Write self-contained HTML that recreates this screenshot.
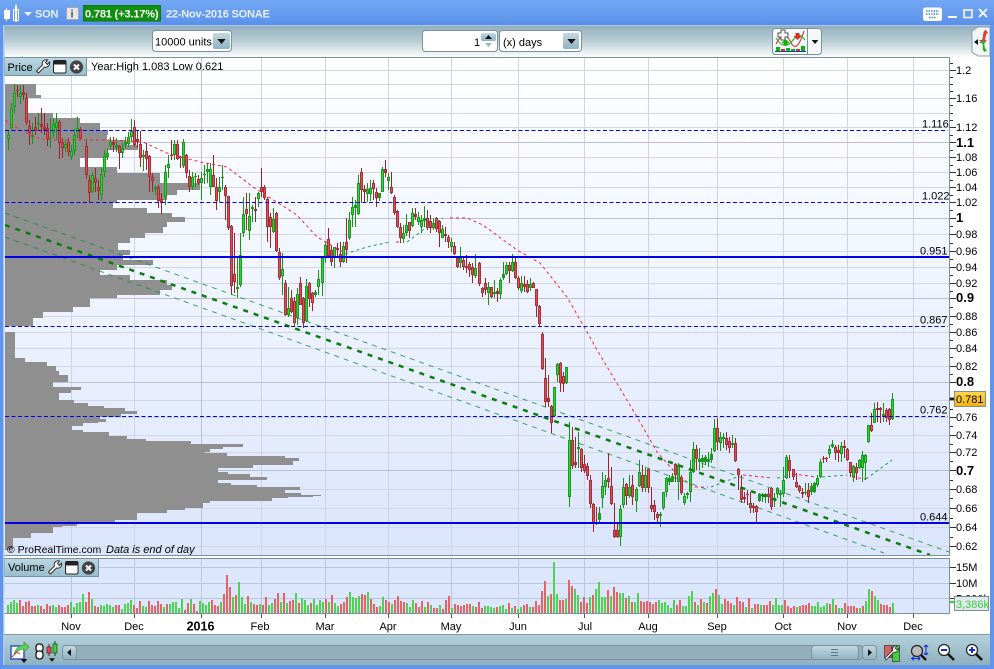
<!DOCTYPE html>
<html><head><meta charset="utf-8"><title>SON</title>
<style>
html,body{margin:0;padding:0;background:#fff;width:994px;height:669px;overflow:hidden}
svg{display:block;position:absolute;left:0;top:0}
text{font-family:"Liberation Sans",Arial,sans-serif;font-size:11px;fill:#000}
.ax{font-size:11px}
.axb{font-size:13px;font-weight:bold}
.lv{font-size:11px}
.tb{font-weight:bold;font-size:11px;fill:#e6f0ff;letter-spacing:-.2px}
</style></head><body>
<svg width="994" height="669" viewBox="0 0 994 669" xmlns="http://www.w3.org/2000/svg">
<defs>
<linearGradient id="gt" x1="0" y1="0" x2="0" y2="1"><stop offset="0" stop-color="#74a8f6"/><stop offset="1" stop-color="#5a91e8"/></linearGradient>
<linearGradient id="gb" x1="0" y1="0" x2="0" y2="1"><stop offset="0" stop-color="#93b0bd"/><stop offset=".5" stop-color="#bccfd6"/><stop offset="1" stop-color="#fbfdfd"/></linearGradient>
<linearGradient id="gc" x1="0" y1="0" x2="0" y2="1"><stop offset="0" stop-color="#feffff"/><stop offset=".35" stop-color="#f3f7ff"/><stop offset="1" stop-color="#dbe5fc"/></linearGradient>
<linearGradient id="gf" x1="0" y1="0" x2="0" y2="1"><stop offset="0" stop-color="#b3d1dc"/><stop offset="1" stop-color="#8fb0be"/></linearGradient>
<linearGradient id="gp" x1="0" y1="0" x2="0" y2="1"><stop offset="0" stop-color="#bcd8e2"/><stop offset="1" stop-color="#98bdcb"/></linearGradient>
<linearGradient id="gy" x1="0" y1="0" x2="0" y2="1"><stop offset="0" stop-color="#ffd84f"/><stop offset="1" stop-color="#f6b500"/></linearGradient>
<linearGradient id="gbtn" x1="0" y1="0" x2="0" y2="1"><stop offset="0" stop-color="#c3d8e1"/><stop offset="1" stop-color="#8fb2c2"/></linearGradient>
<symbol id="wr" width="15" height="15" viewBox="0 0 15 15"><path d="M1 12L7 6C6 3 8 0 12 1L10 3.5 11.8 5.5 14 3C15 6 12 9 9 8L3 14Z" fill="#fff" stroke="#333" stroke-width="1"/></symbol>
<symbol id="win" width="14" height="14" viewBox="0 0 14 14"><rect x=".5" y=".5" width="12.5" height="12.5" rx="1.5" fill="#fff" stroke="#222"/><rect x="1" y="1" width="11.5" height="3.5" fill="#222"/></symbol>
<symbol id="cl" width="14" height="14" viewBox="0 0 14 14"><circle cx="7" cy="7" r="6.6" fill="#444"/><path d="M4.5 4.5l5 5M9.5 4.5l-5 5" stroke="#fff" stroke-width="2"/></symbol>
<symbol id="dn" width="10" height="6" viewBox="0 0 10 6"><path d="M0 0H10L5 6Z" fill="#111"/></symbol>
</defs>

<!-- window frame -->
<rect width="994" height="669" fill="#fff"/>
<rect width="994" height="25" fill="url(#gt)"/>
<rect y="25" width="994" height="1" fill="#a9c6ee"/>
<rect x="4" y="26" width="986" height="31" fill="url(#gb)"/>

<!-- chart pane -->
<rect x="5" y="57" width="944" height="498" fill="url(#gc)"/>
<g stroke="#d3d7e5" stroke-width="1" shape-rendering="crispEdges">
<path d="M5 70.5H949M5 84.5H949M5 98.5H949M5 113.5H949M5 127.5H949M5 157.5H949M5 172.5H949M5 187.5H949M5 234.5H949M5 251.5H949M5 267.5H949M5 283.5H949M5 316.5H949M5 332.5H949M5 348.5H949M5 366.5H949M5 400.5H949M5 417.5H949M5 435.5H949M5 452.5H949M5 489.5H949M5 508.5H949M5 527.5H949M5 546.5H949"/>
<path d="M71.5 57V555M134.5 57V555M261.5 57V555M325.5 57V555M388.5 57V555M451.5 57V555M518.5 57V555M584.5 57V555M648.5 57V555M717.5 57V555M783.5 57V555M847.5 57V555M913.5 57V555" stroke="#cfd3e2"/>
<path d="M5 142.5H949M5 218.5H949M5 298.5H949M5 382.5H949M5 470.5H949" stroke="#bcc0d4"/>
<path d="M201.5 57V555" stroke="#bcc0d4"/>
</g>

<!-- volume profile -->
<path fill="#8f8f8f" shape-rendering="crispEdges" d="M5 84H36V95H41V98H27V113H53V118H80V123H100V130H108V135H107V140H125V145H138V150H107V158H80V167H117V173H160V183H200V190H177V195H167V200H117V203H113V208H147V213H172V217H185V222H167V227H163V233H145V238H130V243H118V250H130V255H123V260H153V265H117V270H100V275H130V280H167V285H172V290H160V295H117V298H90V307H73V312H43V318H33V326H5Z"/>
<path fill="#8f8f8f" shape-rendering="crispEdges" d="M5 332H15V358H25V362H47V366H56V371H59V375H68V382H53V387H81V390H71V393H59V400H74V403H88V406H104V408H125V411H137V414H121V417H100V419H106V422H98V423H83V426H72V430H83V432H109V436H127V439H146V441H191V444H243V447H223V449H210V452H205V453H227V456H285V458H299V461H293V465H253V468H218V472H228V474H250V477H267V480H218V483H231V485H257V487H300V490H285V493H301V495H321V496H313V497H288V498H272V501H210V503H203V508H185V510H167V513H137V520H115V523H77V526H62V527H53V533H31V538H13V550H5Z"/>

<!-- candles -->
<g transform="translate(.5,0)" fill="none">
<path stroke="#149314" stroke-width="1" d="M8 130V150M11 103V130M14 84V113M20 85V104M32 123V144M38 113V131M50 118V148M53 118V138M56 113V140M65 140V152M71 145V160M74 129V155M77 117V138M92 172V193M101 168V201M104 150V177M107 148V160M110 137V150M116 138V152M122 143V158M125 137V148M128 132V147M131 119V142M143 150V171M155 185V195M165 165V205M168 155V178M174 140V160M183 139V168M192 172V190M195 173V187M201 172V200M204 165V184M207 163V183M210 163V195M219 177V202M222 165V190M237 258V298M240 233V287M243 197V237M249 193V240M252 205V222M258 192V207M273 208V233M282 253V295M288 287V317M297 288V325M306 279V322M315 290V297M318 270V295M322 257V296M325 242V263M334 247V268M343 242V263M349 212V240M352 197V227M355 200V227M358 175V215M367 183V202M370 180V201M379 193V201M382 167V192M388 173V190M403 225V243M406 214V236M412 208V227M418 212V225M421 215V233M424 206V227M433 218V230M442 225V238M451 238V252M460 247V268M475 254V278M488 282V305M494 280V298M500 278V299M503 262V280M506 262V275M512 254V272M521 276V293M530 278V291M554 387V417M557 363V382M566 367V384M569 422V507M578 432V468M599 507V522M602 472V508M605 475V495M620 505V546M623 478V508M629 475V498M636 487V512M639 460V487M645 468V492M660 512V527M663 492V510M666 477V497M669 475V485M672 473V482M678 463V500M684 493V505M687 492V499M690 460V502M693 442V473M699 448V470M702 455V468M705 455V465M708 452V467M711 448V463M714 419V452M720 432V451M723 433V448M732 435V448M759 493V502M762 493V502M765 493V503M774 493V507M777 487V498M780 490V507M783 467V497M786 455V479M805 483V495M811 483V495M814 482V493M817 475V487M820 459V478M829 445V458M832 440V448M841 442V462M853 465V482M859 459V469M862 451V482M865 454V480M868 425V443M874 403V423M883 403V422M892 393V420"/>
<path stroke="#1a9a20" stroke-width="3" d="M8 135V139M11 108V128M14 93V107M20 93V97M32 135V137M38 123V124M50 138V139M53 124V133M56 122V128M65 144V148M71 151V157M74 135V151M77 128V132M92 175V192M101 174V195M104 156V172M107 153V157M110 142V146M116 145V148M122 148V153M125 142V145M128 137V144M131 131V137M143 155V157M155 187V190M165 172V197M168 164V168M174 144V155M183 142V166M192 177V187M195 176V177M201 178V183M204 174V175M207 169V172M210 169V187M219 187V192M222 177V178M237 287V289M240 255V285M243 214V233M249 216V231M252 207V209M258 193V199M273 219V232M282 269V276M288 308V315M297 294V318M306 286V321M315 292V295M318 279V287M322 258V283M325 245V258M334 247V258M343 246V262M349 220V238M352 207V215M355 205V208M358 183V214M367 189V194M370 188V194M379 193V198M382 169V192M388 177V181M403 233V239M406 225V233M412 213V226M418 217V222M421 220V227M424 218V221M433 223V228M442 229V238M451 242V247M460 258V263M475 268V276M488 287V293M494 292V294M500 280V294M503 274V278M506 265V274M512 262V271M521 283V291M530 284V288M554 387V416M557 364V375M566 367V383M569 440V497M578 447V449M599 513V520M602 486V498M605 480V487M620 509V537M623 487V505M629 487V496M636 489V501M639 472V486M645 475V488M660 514V516M663 492V508M666 478V492M669 478V482M672 476V482M678 465V482M684 496V503M687 493V495M690 472V492M693 449V472M699 459V462M702 458V462M705 457V462M708 459V462M711 454V460M714 428V451M720 437V443M723 437V439M732 443V445M759 494V501M762 495V496M765 494V497M774 498V499M777 488V494M780 493V495M783 480V494M786 457V478M805 492V493M811 486V492M814 483V492M817 478V485M820 462V477M829 449V454M832 444V447M841 446V454M853 466V477M859 460V468M862 455V468M865 455V463M868 425V442M874 409V423M883 414V417M892 399V419"/>
<path stroke="#2fd435" stroke-width="1" d="M8 136V138M11 109V127M14 94V106M20 94V96M53 125V132M56 123V127M65 145V147M71 152V156M74 136V150M77 129V131M92 176V191M101 175V194M104 157V171M107 154V156M110 143V145M122 149V152M128 138V143M131 132V136M165 173V196M168 165V167M174 145V154M183 143V165M192 178V186M201 179V182M210 170V186M219 188V191M240 256V284M243 215V232M249 217V230M258 194V198M273 220V231M282 270V275M288 309V314M297 295V317M306 287V320M318 280V286M322 259V282M325 246V257M334 248V257M343 247V261M349 221V237M352 208V214M358 184V213M367 190V193M370 189V193M382 170V191M388 178V180M403 234V238M406 226V232M412 214V225M418 218V221M421 221V226M433 224V227M442 230V237M451 243V246M460 259V262M475 269V275M488 288V292M500 281V293M506 266V273M512 263V270M521 284V290M530 285V287M554 388V415M557 365V374M566 368V382M569 441V496M602 487V497M605 481V486M620 510V536M623 488V504M629 488V495M636 490V500M639 473V485M645 476V487M663 493V507M666 479V491M678 466V481M684 497V502M690 473V491M693 450V471M714 429V450M720 438V442M765 495V496M777 489V493M783 481V493M786 458V477M817 479V484M820 463V476M829 450V453M841 447V453M853 467V476M859 461V467M862 456V467M865 456V462M868 426V441M874 410V422M892 400V418"/>
<path stroke="#a02229" stroke-width="1" d="M17 85V97M23 85V100M26 93V125M29 120V145M35 117V135M41 108V133M44 113V135M47 123V146M59 120V159M62 138V158M68 138V156M80 127V140M86 139V179M89 175V203M95 168V192M98 180V200M113 137V152M119 145V169M134 120V147M137 130V148M140 131V167M146 143V170M149 155V192M152 173V192M158 185V208M161 193V214M171 140V160M177 140V160M180 156V168M186 154V178M189 170V192M198 175V185M213 155V187M216 178V210M225 185V220M228 197V230M231 225V295M234 233V293M246 193V230M255 197V222M261 168V197M264 185V200M267 197V242M270 213V248M276 212V252M279 248V280M285 280V316M291 290V313M294 297V327M300 277V305M303 297V328M309 282V307M312 292V311M328 228V258M331 245V266M337 243V258M340 242V267M346 218V263M361 168V203M364 185V202M373 180V200M376 188V207M385 160V177M391 172V194M394 195V215M397 210V228M400 223V243M409 222V238M415 208V220M427 210V230M430 215V233M436 217V232M439 220V247M445 227V242M448 235V248M454 242V255M457 257V268M463 257V270M466 255V273M469 262V277M472 263V283M479 262V286M482 287V297M485 278V295M491 287V298M497 288V302M509 262V283M515 257V279M518 276V290M524 276V292M527 280V293M533 282V288M536 289V317M539 305V327M542 332V370M545 358V407M548 375V407M551 405V433M560 362V392M563 372V392M572 427V469M575 437V468M581 448V472M584 455V473M587 463V480M590 475V508M593 503V532M596 507V525M608 453V488M611 467V505M614 503V538M617 523V538M626 483V505M632 475V505M642 465V492M648 468V493M651 487V512M654 500V520M657 512V522M675 463V482M681 475V495M696 445V470M717 418V450M726 432V450M729 437V453M735 438V462M738 468V490M741 475V503M744 492V503M747 490V505M750 492V513M753 503V513M756 505V522M768 488V503M771 487V510M789 455V478M793 469V480M796 473V488M799 485V493M802 488V498M808 483V503M823 456V463M826 457V462M835 445V460M838 445V462M844 440V458M847 448V461M850 462V477M856 463V480M871 413V432M877 402V422M880 407V423M886 408V422M889 408V425"/>
<path stroke="#a82f35" stroke-width="3" d="M17 90V91M23 92V95M26 98V123M29 126V133M35 127V131M41 124V127M44 127V131M47 128V139M59 122V143M62 142V148M68 142V152M80 129V139M86 146V175M89 180V193M95 178V183M98 187V191M113 142V145M119 146V153M134 127V145M137 139V142M140 144V158M146 151V159M149 156V177M152 177V181M158 187V201M161 199V203M171 155V156M177 144V159M180 157V158M186 155V173M189 176V187M198 179V183M213 175V187M216 187V201M225 187V196M228 196V228M231 226V286M234 274V282M246 209V214M255 209V211M261 187V192M264 187V198M267 199V227M270 217V227M276 213V251M279 252V278M285 283V315M291 298V312M294 301V323M300 283V305M303 298V323M309 283V299M312 293V303M328 239V256M331 250V262M337 248V250M340 254V262M346 242V250M361 172V190M364 189V192M373 183V189M376 192V198M385 169V173M391 187V193M394 197V213M397 211V227M400 227V238M409 222V231M415 214V217M427 218V228M430 221V228M436 218V229M439 221V233M445 234V236M448 237V242M454 246V254M457 258V267M463 260V267M466 266V268M469 264V270M472 267V275M479 263V284M482 288V293M485 283V290M491 287V297M497 291V294M509 265V271M515 262V278M518 278V288M524 284V287M527 284V292M533 283V288M536 289V306M539 306V324M542 334V369M545 378V402M548 398V402M551 406V423M560 363V383M563 376V384M572 440V466M575 462V465M581 449V468M584 464V471M587 466V476M590 480V504M593 504V524M596 522V524M608 478V482M611 486V504M614 530V537M617 530V537M626 484V496M632 485V497M642 475V488M648 469V488M651 505V509M654 505V512M657 514V518M675 464V475M681 477V493M696 449V459M717 428V442M726 438V445M729 441V448M735 443V461M738 469V475M741 487V500M744 497V499M747 494V495M750 503V508M753 506V508M756 506V512M768 494V497M771 488V507M789 460V471M793 469V477M796 482V487M799 486V491M802 492V494M808 490V497M823 458V459M826 458V459M835 447V453M838 450V453M844 446V448M847 449V460M850 462V473M856 467V473M871 425V431M877 408V410M880 408V410M886 410V418M889 409V420"/>
<path stroke="#d9505a" stroke-width="1" d="M26 99V122M29 127V132M35 128V130M47 129V138M59 123V142M62 143V147M68 143V151M80 130V138M86 147V174M89 181V192M95 179V182M98 188V190M119 147V152M134 128V144M140 145V157M146 152V158M149 157V176M152 178V180M158 188V200M161 200V202M177 145V158M186 156V172M189 177V186M198 180V182M213 176V186M216 188V200M225 188V195M228 197V227M231 227V285M234 275V281M246 210V213M261 188V191M264 188V197M267 200V226M270 218V226M276 214V250M279 253V277M285 284V314M291 299V311M294 302V322M300 284V304M303 299V322M309 284V298M312 294V302M328 240V255M331 251V261M340 255V261M346 243V249M361 173V189M373 184V188M376 193V197M391 188V192M394 198V212M397 212V226M400 228V237M409 223V230M427 219V227M430 222V227M436 219V228M439 222V232M448 238V241M454 247V253M457 259V266M463 261V266M469 265V269M472 268V274M479 264V283M482 289V292M485 284V289M491 288V296M509 266V270M515 263V277M518 279V287M524 285V286M527 285V291M533 284V287M536 290V305M539 307V323M542 335V368M545 379V401M551 407V422M560 364V382M563 377V383M572 441V465M581 450V467M584 465V470M587 467V475M590 481V503M593 505V523M608 479V481M611 487V503M614 531V536M617 531V536M626 485V495M632 486V496M642 476V487M648 470V487M651 506V508M654 506V511M657 515V517M675 465V474M681 478V492M696 450V458M717 429V441M726 439V444M729 442V447M735 444V460M738 470V474M741 488V499M750 504V507M756 507V511M768 495V496M771 489V506M789 461V470M793 470V476M796 483V486M799 487V490M808 491V496M835 448V452M838 451V452M847 450V459M850 463V472M856 468V472M871 426V430M886 411V417M889 410V419"/>
</g>

<!-- MA dashed curves -->
<g fill="none" stroke-width="1" stroke-dasharray="3 3">
<path stroke="#ee2a3a" d="M5 120L20 130 40 139 60 140 87 140 110 140 143 142 167 153 200 162 227 167 253 187 297 215 317 237 345 253"/>
<path stroke="#1f9f55" d="M345 254L367 247 390 242"/>
<path stroke="#ee2a3a" d="M396 242H402"/>
<path stroke="#1f9f55" d="M407 242L423 230 443 218"/>
<path stroke="#ee2a3a" d="M450 218H467L483 225 517 250 540 263 567 297 583 325 600 355 615 380 640 422 657 452 673 470 693 487H708"/>
<path stroke="#1f9f55" d="M711 487L737 477"/>
<path stroke="#ee2a3a" d="M743 475L773 478"/>
<path stroke="#1f9f55" d="M777 478L788 476"/>
<path stroke="#ee2a3a" d="M793 474L817 477"/>
<path stroke="#1f9f55" d="M822 477L847 475"/>
<path stroke="#ee2a3a" d="M852 477L865 479"/>
<path stroke="#1f9f55" d="M866 479L892 460"/>
</g>

<!-- trend channel -->
<g fill="none">
<path d="M5 213L949 552" stroke="#148f3a" stroke-opacity=".8" stroke-width="1" stroke-dasharray="5 5"/>
<path d="M5 237L884 553" stroke="#148f3a" stroke-opacity=".8" stroke-width="1" stroke-dasharray="5 5"/>
<path d="M5 225L930 555" stroke="#0a7d0a" stroke-width="2.5" stroke-dasharray="5 6"/>
</g>

<!-- horizontal levels -->
<g shape-rendering="crispEdges">
<path d="M5 130.500H948M5 202.500H948M5 326.500H948M5 416.500H948" stroke="#0000f0" stroke-width="1" stroke-dasharray="4 2.5" fill="none"/>
<rect x="5" y="256" width="944" height="2" fill="#0000e6"/>
<rect x="5" y="522" width="944" height="2" fill="#0000e6"/>
</g>
<text class="lv" x="922" y="127.500">1.116</text>
<text class="lv" x="922" y="199.500">1.022</text>
<text class="lv" x="920" y="254.500">0.951</text>
<text class="lv" x="920" y="323.500">0.867</text>
<text class="lv" x="920" y="413.500">0.762</text>
<text class="lv" x="920" y="520.500">0.644</text>

<text x="7" y="553" style="font-size:10.500px">© ProRealTime.com</text>
<text x="106" y="553" font-style="italic">Data is end of day</text>

<!-- chart border -->
<g stroke="#7d8f9a" fill="none" shape-rendering="crispEdges">
<path d="M4 57.500H949.500V555.500H4"/>
<path d="M4 558.500H949.500V613.500H4"/>
</g>

<!-- Y axis -->
<g stroke="#333" stroke-width="1" shape-rendering="crispEdges">
<path d="M950 70.500h6M950 84.500h3M950 98.500h6M950 113.500h3M950 127.500h6M950 142.500h6M950 157.500h6M950 172.500h6M950 187.500h6M950 202.500h6M950 218.500h6M950 234.500h6M950 251.500h6M950 267.500h6M950 283.500h6M950 298.500h6M950 316.500h6M950 332.500h6M950 348.500h6M950 366.500h6M950 382.500h6M950 417.500h6M950 435.500h6M950 452.500h6M950 470.500h6M950 489.500h6M950 508.500h6M950 527.500h6M950 546.500h6"/>
<path d="M950 63.500h3M950 77.500h3M950 91.500h3M950 105.500h3M950 120.500h3M950 135.500h3M950 150.500h3M950 165.500h3M950 180.500h3M950 195.500h3M950 210.500h3M950 226.500h3M950 243.500h3M950 259.500h3M950 275.500h3M950 291.500h3M950 307.500h3M950 324.500h3M950 340.500h3M950 357.500h3M950 374.500h3M950 409.500h3M950 426.500h3M950 444.500h3M950 461.500h3M950 480.500h3M950 498.500h3M950 518.500h3M950 537.500h3"/>
<rect x="950" y="398" width="6" height="2" fill="#000"/>
</g>
<text class="ax" x="956" y="74">1.2</text><text class="ax" x="956" y="102">1.16</text><text class="ax" x="956" y="131">1.12</text><text class="axb" x="956" y="147">1.1</text><text class="ax" x="956" y="161">1.08</text><text class="ax" x="956" y="176">1.06</text><text class="ax" x="956" y="191">1.04</text><text class="ax" x="956" y="206">1.02</text><text class="axb" x="956" y="222">1</text><text class="ax" x="956" y="238">0.98</text><text class="ax" x="956" y="255">0.96</text><text class="ax" x="956" y="271">0.94</text><text class="ax" x="956" y="287">0.92</text><text class="axb" x="956" y="302">0.9</text><text class="ax" x="956" y="320">0.88</text><text class="ax" x="956" y="336">0.86</text><text class="ax" x="956" y="352">0.84</text><text class="ax" x="956" y="370">0.82</text><text class="axb" x="956" y="386">0.8</text><text class="ax" x="956" y="421">0.76</text><text class="ax" x="956" y="439">0.74</text><text class="ax" x="956" y="456">0.72</text><text class="axb" x="956" y="475">0.7</text><text class="ax" x="956" y="493">0.68</text><text class="ax" x="956" y="512">0.66</text><text class="ax" x="956" y="531">0.64</text><text class="ax" x="956" y="550">0.62</text>
<rect x="954.500" y="391.500" width="31" height="15" fill="url(#gy)" stroke="#7b8e9a"/>
<text class="ax" x="956" y="403">0.781</text>

<!-- volume pane -->
<rect x="5" y="559" width="944" height="54" fill="#dce6fc"/>
<g stroke="#bcc6de" stroke-width="1" shape-rendering="crispEdges">
<path d="M5 567.500H949M5 583.500H949M5 598.500H949"/>
<path d="M71.500 559V613M134.500 559V613M201.500 559V613M261.500 559V613M325.500 559V613M388.500 559V613M451.500 559V613M518.500 559V613M584.500 559V613M648.500 559V613M717.500 559V613M783.500 559V613M847.500 559V613M913.500 559V613"/>
</g>
<g fill="none" stroke-width="2" shape-rendering="crispEdges">
<path stroke="#4fd24f" d="M8 613v-8M11 613v-11M14 613v-13M17 613v-10M38 613v-8M53 613v-8M56 613v-6M71 613v-11M74 613v-6M77 613v-10M80 613v-11M83 613v-19M92 613v-14M101 613v-8M104 613v-7M107 613v-9M110 613v-8M113 613v-6M122 613v-4M125 613v-9M128 613v-10M131 613v-13M143 613v-7M146 613v-6M164 613v-6M170 613v-9M173 613v-11M176 613v-11M179 613v-5M182 613v-14M191 613v-14M200 613v-12M203 613v-10M206 613v-8M209 613v-11M221 613v-11M233 613v-16M239 613v-31M242 613v-16M245 613v-9M251 613v-11M260 613v-9M269 613v-8M272 613v-10M281 613v-11M287 613v-10M296 613v-20M302 613v-15M305 613v-13M308 613v-8M314 613v-14M317 613v-8M320 613v-13M323 613v-11M329 613v-11M335 613v-10M338 613v-7M350 613v-21M353 613v-16M356 613v-15M359 613v-17M368 613v-21M380 613v-7M383 613v-16M392 613v-9M407 613v-10M410 613v-6M413 613v-13M425 613v-6M431 613v-8M440 613v-8M452 613v-5M473 613v-7M485 613v-7M488 613v-7M491 613v-6M494 613v-5M500 613v-7M503 613v-8M506 613v-4M512 613v-5M518 613v-4M521 613v-6M530 613v-6M548 613v-17M554 613v-51M557 613v-19M566 613v-14M575 613v-24M578 613v-18M590 613v-16M596 613v-24M599 613v-31M602 613v-16M605 613v-16M611 613v-17M620 613v-20M623 613v-20M629 613v-17M635 613v-11M638 613v-20M659 613v-13M662 613v-10M665 613v-11M668 613v-8M671 613v-5M674 613v-13M683 613v-7M686 613v-7M689 613v-17M692 613v-22M698 613v-8M704 613v-11M710 613v-17M713 613v-20M719 613v-18M722 613v-9M734 613v-8M746 613v-6M752 613v-5M761 613v-8M773 613v-8M776 613v-15M779 613v-8M782 613v-8M797 613v-6M812 613v-7M815 613v-7M818 613v-11M821 613v-6M824 613v-7M827 613v-10M833 613v-14M839 613v-5M842 613v-5M860 613v-5M866 613v-12M869 613v-24M875 613v-17M878 613v-13M893 613v-10"/>
<path stroke="#e36464" d="M20 613v-13M23 613v-7M26 613v-11M29 613v-12M32 613v-7M35 613v-7M41 613v-7M44 613v-4M47 613v-9M50 613v-7M59 613v-8M62 613v-6M65 613v-6M68 613v-8M86 613v-11M89 613v-21M95 613v-7M98 613v-6M116 613v-8M119 613v-8M134 613v-8M137 613v-5M140 613v-12M149 613v-12M152 613v-8M155 613v-7M158 613v-12M161 613v-9M167 613v-9M185 613v-3M188 613v-10M194 613v-9M197 613v-2M212 613v-13M215 613v-8M218 613v-7M224 613v-19M227 613v-38M230 613v-26M236 613v-18M248 613v-17M254 613v-9M257 613v-8M263 613v-8M266 613v-16M275 613v-14M278 613v-20M284 613v-20M290 613v-12M293 613v-13M299 613v-10M311 613v-10M326 613v-14M332 613v-18M341 613v-9M344 613v-11M347 613v-16M362 613v-19M365 613v-18M371 613v-14M374 613v-9M377 613v-6M386 613v-13M389 613v-11M395 613v-13M398 613v-17M401 613v-12M404 613v-11M416 613v-10M419 613v-6M422 613v-12M428 613v-11M434 613v-5M437 613v-5M443 613v-4M446 613v-13M449 613v-17M455 613v-9M458 613v-8M461 613v-7M464 613v-8M467 613v-9M470 613v-9M476 613v-6M479 613v-11M482 613v-5M497 613v-6M509 613v-10M515 613v-7M524 613v-8M527 613v-9M533 613v-6M536 613v-12M539 613v-8M542 613v-22M545 613v-32M551 613v-19M560 613v-13M563 613v-13M569 613v-33M572 613v-27M581 613v-11M584 613v-16M587 613v-10M593 613v-18M608 613v-23M614 613v-26M617 613v-21M626 613v-15M632 613v-11M641 613v-12M644 613v-11M647 613v-12M650 613v-11M653 613v-9M656 613v-11M677 613v-8M680 613v-13M695 613v-11M701 613v-14M707 613v-10M716 613v-24M725 613v-14M728 613v-12M731 613v-10M737 613v-16M740 613v-12M743 613v-11M749 613v-15M755 613v-9M758 613v-9M764 613v-8M767 613v-8M770 613v-12M785 613v-13M788 613v-7M791 613v-5M794 613v-7M800 613v-7M803 613v-8M806 613v-8M809 613v-10M830 613v-9M836 613v-8M845 613v-10M848 613v-7M851 613v-7M854 613v-7M857 613v-5M863 613v-7M872 613v-22M881 613v-9M884 613v-8M887 613v-8M890 613v-6"/>
</g>

<!-- volume axis -->
<g stroke="#333" shape-rendering="crispEdges"><path d="M950 567.500h6M950 583.500h6M950 598.500h6"/></g>
<text class="ax" x="956" y="571">15M</text>
<text class="ax" x="956" y="587">10M</text>
<text class="ax" x="956" y="602.500">5,000k</text>
<rect x="954.500" y="596.500" width="34" height="14" fill="#dfe9ee" stroke="#7b8e9a"/>
<text class="ax" x="956" y="608" style="fill:#3bd03b">3,386k</text>
<rect x="950" y="601" width="5" height="2" fill="#3bd03b"/>

<!-- pane headers -->
<rect x="4.500" y="57.500" width="82" height="18" fill="url(#gp)" stroke="#7a929c"/>
<text x="7.500" y="71">Price</text>
<use href="#wr" x="35.500" y="59"/><use href="#win" x="53" y="60"/><use href="#cl" x="69.500" y="60"/>
<text x="91" y="70">Year:High 1.083 Low 0.621</text>

<rect x="4.500" y="558.500" width="94" height="18" fill="url(#gp)" stroke="#7a929c"/>
<text x="8" y="571">Volume</text>
<use href="#wr" x="47.500" y="560"/><use href="#win" x="65" y="561"/><use href="#cl" x="81.500" y="561"/>

<!-- date axis -->
<rect x="4" y="614" width="986" height="20" fill="#fff"/>
<g stroke="#555" shape-rendering="crispEdges"><path d="M71.500 614v4M134.500 614v4M201.500 614v4M261.500 614v4M325.500 614v4M388.500 614v4M451.500 614v4M518.500 614v4M584.500 614v4M648.500 614v4M717.500 614v4M783.500 614v4M847.500 614v4M913.500 614v4"/></g>
<g text-anchor="middle">
<text x="71" y="630">Nov</text><text x="134" y="630">Dec</text><text x="200.500" y="630.500" style="font-weight:bold;font-size:12.500px">2016</text><text x="260" y="630">Feb</text><text x="325" y="630">Mar</text><text x="388" y="630">Apr</text><text x="451" y="630">May</text><text x="518" y="630">Jun</text><text x="585" y="630">Jul</text><text x="648" y="630">Aug</text><text x="717" y="630">Sep</text><text x="783" y="630">Oct</text><text x="847" y="630">Nov</text><text x="913" y="630">Dec</text>
</g>

<!-- bottom toolbar -->
<rect x="4" y="634" width="986" height="1" fill="#7f98a4"/>
<rect x="4" y="635" width="986" height="30" fill="url(#gf)"/>
<rect x="62.500" y="645.500" width="800" height="14" rx="3" fill="#94b0be" stroke="#7a939f"/>
<rect x="62.500" y="645.500" width="14" height="14" rx="3" fill="url(#gbtn)" stroke="#7a939f"/>
<path d="M71 649v7l-4-3.500z" fill="#111"/>
<rect x="811.500" y="645.500" width="47" height="14" rx="3" fill="url(#gbtn)" stroke="#7a939f"/>
<path d="M831 649.500h7M831 652.500h7M831 655.500h7" stroke="#5f7885"/>
<rect x="862.500" y="645.500" width="14" height="14" rx="3" fill="url(#gbtn)" stroke="#7a939f"/>
<path d="M868 649v7l4-3.500z" fill="#111"/>

<!-- bottom-left icons -->
<rect x="11" y="646" width="13" height="13" fill="#fff" stroke="#2a55c8" stroke-width="1.500"/>
<path d="M12 657l5-5 3 2" stroke="#d33" fill="none"/>
<path d="M14 654C16 648 20 645 24 645V642l5 5-5 5V649C20 649 17 651 14 654Z" fill="#5fcf5f" stroke="#3a9a3a" stroke-width=".7"/>
<use href="#dn" x="20.500" y="659" width="7" height="4"/>
<g fill="#fff" stroke="#111" stroke-width="1.300"><rect x="36" y="644" width="7" height="8" rx="3"/><rect x="36" y="651" width="7" height="8" rx="3"/></g>
<rect x="47" y="647" width="4" height="6" fill="#d9505a" stroke="#8a2a2a"/>
<rect x="53" y="644" width="4" height="9" fill="#3fd03f" stroke="#1b7a1b"/>
<path d="M49 644v3M49 653v3M55 641v3M55 653v3" stroke="#333"/>
<use href="#dn" x="49" y="658" width="6" height="4"/>

<!-- bottom-right icons -->
<rect x="884.500" y="645.500" width="7" height="12" fill="#d86060" stroke="#555"/>
<rect x="892.500" y="645.500" width="7" height="16" fill="#3fd03f" stroke="#555"/>
<path d="M885 658l8-8c-1-2 1-5 4-4l-2 2 2 2 2-2c0 3-3 5-5 4l-8 8z" fill="#fff" stroke="#333" stroke-width=".8"/>
<circle cx="917" cy="651" r="5.500" fill="#bbb" stroke="#222" stroke-width="1.200"/>
<path d="M921 655l5 5" stroke="#111" stroke-width="2.500"/>
<path d="M911 658.500h9M912 658.500l2-2M912 658.500l2 2M920 658.500l-2-2M920 658.500l-2 2M926 645v10M926 645l-2 2M926 645l2 2M926 655l-2-2M926 655l2-2" stroke="#0a2be0" fill="none"/>
<circle cx="944" cy="650" r="5.500" fill="#fff" stroke="#222" stroke-width="1.200"/>
<path d="M941 650h6" stroke="#0a2be0" stroke-width="2"/>
<path d="M948 654l6 6" stroke="#111" stroke-width="2.500"/>
<circle cx="972" cy="650" r="5.500" fill="#fff" stroke="#222" stroke-width="1.200"/>
<path d="M969 650h6M972 647v6" stroke="#0a2be0" stroke-width="2"/>
<path d="M976 654l6 6" stroke="#111" stroke-width="2.500"/>

<!-- top toolbar controls -->
<rect x="152.500" y="30.500" width="79" height="21" rx="3" fill="#fff" stroke="#7a929c"/>
<text x="155" y="45.500">10000 units</text>
<rect x="213" y="33" width="17" height="16" rx="2" fill="url(#gbtn)"/>
<use href="#dn" x="217" y="39" width="9" height="5"/>
<rect x="422.500" y="30.500" width="75" height="21" rx="3" fill="#fff" stroke="#7a929c"/>
<text x="474" y="46">1</text>
<rect x="481" y="33" width="15" height="8" rx="2" fill="url(#gbtn)"/>
<path d="M485 39h7l-3.500-4z" fill="#111"/>
<path d="M485 43h7l-3.500 4z" fill="#9db5c1"/>
<rect x="499.500" y="30.500" width="82" height="21" rx="3" fill="#fff" stroke="#7a929c"/>
<text x="503" y="46">(x) days</text>
<rect x="563" y="33" width="16" height="16" rx="2" fill="url(#gbtn)"/>
<use href="#dn" x="567" y="39" width="9" height="5"/>

<!-- indicator button -->
<rect x="772.500" y="28.500" width="49" height="26" rx="3" fill="#f4f8f9" stroke="#7a929c"/>
<path d="M807.500 29v25" stroke="#7a929c"/>
<path d="M776 44C782 33 786 33 790 41S798 50 804 31" fill="none" stroke="#d03a3a" stroke-width="1.200"/>
<path d="M776 38C782 48 788 47 793 40S800 34 805 40" fill="none" stroke="#2fb52f" stroke-width="1.200"/>
<path d="M778 33h3v-3h4v3h3v4h-3v3h-4v-3h-3z" fill="#fff" stroke="#555"/>
<path d="M783.500 45v-2h-2l4-4 4 4h-2v2z" fill="#0ab30a"/>
<path d="M795.500 33v3h-2l4 4 4-4h-2v-3z" fill="#e02a2a"/>
<g shape-rendering="crispEdges"><rect x="776" y="47" width="4" height="4" fill="#0ab30a"/><rect x="781" y="49" width="4" height="2" fill="#e02a2a"/><rect x="786" y="48" width="4" height="3" fill="#0ab30a"/><rect x="791" y="49" width="4" height="2" fill="#0ab30a"/><rect x="796" y="49" width="4" height="2" fill="#e02a2a"/><rect x="801" y="46" width="4" height="5" fill="#0ab30a"/><rect x="775" y="51" width="31" height="1" fill="#1a3fb0"/></g>
<use href="#dn" x="811" y="40" width="8" height="4"/>

<!-- right tab -->
<path d="M990 27h-12l-6 4v21l6 4h12z" fill="#f2f6f7" stroke="#8a9da7"/>
<path d="M978 39l-4 3 4 3z" fill="#111"/>
<path d="M986 30C982 31 984 36 982 40h-3l4 4 4-4h-2C986 37 985 34 988 33Z" fill="#e03a3a"/>
<path d="M985 52C981 50 984 46 982 43h-3l4-3 3 3h-2C985 46 984 49 987 50Z" fill="#24b024"/>

<!-- title bar content -->
<g shape-rendering="crispEdges" fill="#fff">
<rect x="4" y="10" width="6" height="9"/><rect x="6" y="8" width="1" height="13"/>
<rect x="13.500" y="9.500" width="5" height="11" fill="none" stroke="#fff"/><rect x="15" y="5" width="2" height="17"/>
</g>
<path d="M24 12h8l-4 4z" fill="#eef4ff"/>
<text class="tb" x="35" y="17.500">SON</text>
<rect x="66.500" y="7.500" width="12" height="12" fill="#e6e6e6" stroke="#9aa7b8"/>
<text x="70.500" y="17.500" style="font-weight:bold;font-size:11px;fill:#555">i</text>
<rect x="83.500" y="5.500" width="77" height="15.500" fill="#0f8f0f" stroke="#0a7a0a"/>
<text x="85" y="17.500" style="font-weight:bold;font-size:11px;fill:#fff;letter-spacing:-.15px">0.781 (+3.17%)</text>
<text class="tb" x="166" y="17.500">22-Nov-2016 SONAE</text>

<rect x="923" y="7.500" width="19" height="13.500" rx="2.500" fill="#fff"/>
<path d="M926 11h13M926 14h13M929 17.500h7" stroke="#4d83dd" stroke-width="1.500" stroke-dasharray="1.500 1"/>
<rect x="948" y="16" width="9" height="2" fill="#fff"/>
<rect x="964" y="10" width="8" height="7.500" fill="none" stroke="#fff" stroke-width="1.500"/>
<path d="M979 9l8 8M987 9l-8 8" stroke="#fff" stroke-width="1.800"/>

<!-- outer borders -->
<rect x="0" y="25" width="3.500" height="644" fill="#5f95ea"/>
<rect x="3" y="25" width="1.500" height="641" fill="#a9c8f4"/>
<rect x="990" y="25" width="4" height="644" fill="#5f95ea"/>
<rect x="0" y="665" width="994" height="4" fill="#5f95ea"/>
</svg>
</body></html>
